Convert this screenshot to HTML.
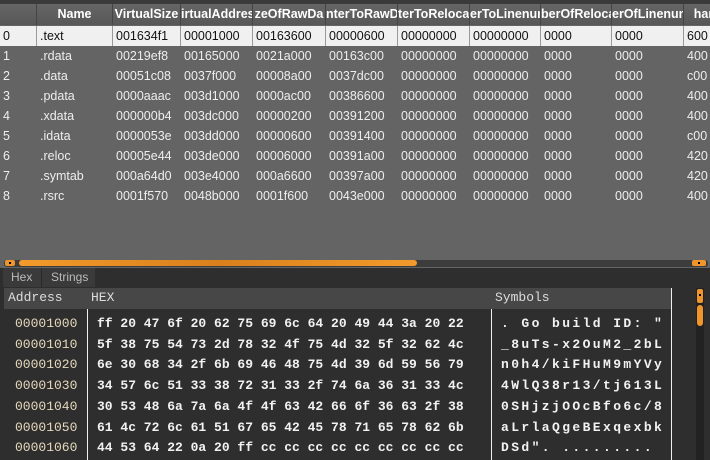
<!DOCTYPE html>
<html><head><style>
body{margin:0;width:710px;height:460px;overflow:hidden;background:#2e2e2e;position:relative;font-family:"Liberation Sans",sans-serif}
.a{position:absolute}
#top{left:0;top:0;width:710px;height:268px;background:#646464}
.hd{position:absolute;top:4px;height:21px;background:linear-gradient(#666,#575757);color:#fff;font-weight:bold;font-size:12.5px;line-height:21px;text-align:center;overflow:hidden;white-space:nowrap;border-right:1px solid #444}
.c{position:absolute;height:20px;line-height:20px;font-size:12.5px;color:#eee;white-space:nowrap;overflow:hidden;padding-left:3px;box-sizing:border-box}
.sel{background:#f0f0f0;color:#111;border-right:1px solid #999}
.m{font-family:"Liberation Mono",monospace;font-size:13px;font-weight:bold;position:absolute;white-space:pre}
</style></head><body>
<div id="top" class="a"></div>
<div class="a" style="left:0;top:0;width:710px;height:4px;background:#3a3a3a"></div>
<div id="tbl"></div>
<div class="a" style="left:4px;top:260px;width:704px;height:7px;background:#3c3c3c;border-radius:3px"></div>
<div class="a" style="left:5px;top:260px;width:10px;height:6px;background:#f0952a;border-radius:2px"><div class="a" style="left:4px;top:2px;width:2px;height:2px;background:#000"></div></div>
<div class="a" style="left:19px;top:260px;width:398px;height:6px;background:linear-gradient(90deg,#f39a2c,#d9801c,#f39a2c);border-radius:3px"></div>
<div class="a" style="left:692px;top:260px;width:14px;height:6px;background:#f0952a;border-radius:2px"><div class="a" style="left:6px;top:2px;width:2px;height:2px;background:#000"></div></div>
<div class="a" style="left:3px;top:268px;width:92px;height:19px;background:#3a3a3a"></div>
<div class="a" style="left:41px;top:268px;width:1px;height:19px;background:#2a2a2a"></div>
<div class="a" style="left:11px;top:270px;font-size:12px;color:#bbb">Hex</div>
<div class="a" style="left:51px;top:270px;font-size:12px;color:#bbb">Strings</div>
<div class="a" style="left:4px;top:288px;width:667px;height:21px;background:#474747"></div>
<div class="m" style="left:8px;top:290px;color:#ddd;font-weight:normal">Address</div>
<div class="m" style="left:91px;top:290px;color:#ddd;font-weight:normal">HEX</div>
<div class="m" style="left:495px;top:290px;color:#ddd;font-weight:normal">Symbols</div>
<div class="a" style="left:87px;top:309px;width:1px;height:151px;background:#eee"></div>
<div class="a" style="left:491px;top:309px;width:1px;height:151px;background:#eee"></div>
<div class="a" style="left:671px;top:288px;width:1px;height:172px;background:#eee"></div>
<div class="a" style="left:696px;top:288px;width:8px;height:172px;background:#222"></div>
<div class="a" style="left:697px;top:289px;width:6px;height:14px;background:#f0952a;border-radius:2px"><div class="a" style="left:2px;top:5px;width:2px;height:2px;background:#000"></div></div>
<div class="a" style="left:697px;top:305px;width:6px;height:21px;background:#f0952a;border-radius:3px"></div>
<div id="hex"></div>
<script>
var cols=[[0,37,''],[37,76,'Name'],[113,68,'VirtualSize'],[181,72,'irtualAddress'],[253,73,'zeOfRawDa'],[326,72,'nterToRawD'],[398,72,'terToReloca'],[470,71,'erToLinenum'],[541,71,'berOfReloca'],[612,72,'erOfLinenum'],[684,40,'har']];
var rows=[['0','.text','001634f1','00001000','00163600','00000600','00000000','00000000','0000','0000','600'],
['1','.rdata','00219ef8','00165000','0021a000','00163c00','00000000','00000000','0000','0000','400'],
['2','.data','00051c08','0037f000','00008a00','0037dc00','00000000','00000000','0000','0000','c00'],
['3','.pdata','0000aaac','003d1000','0000ac00','00386600','00000000','00000000','0000','0000','400'],
['4','.xdata','000000b4','003dc000','00000200','00391200','00000000','00000000','0000','0000','400'],
['5','.idata','0000053e','003dd000','00000600','00391400','00000000','00000000','0000','0000','c00'],
['6','.reloc','00005e44','003de000','00006000','00391a00','00000000','00000000','0000','0000','420'],
['7','.symtab','000a64d0','003e4000','000a6600','00397a00','00000000','00000000','0000','0000','420'],
['8','.rsrc','0001f570','0048b000','0001f600','0043e000','00000000','00000000','0000','0000','400']];
var h='';
cols.forEach(function(c){h+='<div class="hd" style="left:'+c[0]+'px;width:'+(c[1]-1)+'px">'+c[2]+'</div>';});
rows.forEach(function(r,i){r.forEach(function(v,j){var c=cols[j];h+='<div class="c'+(i==0?' sel':'')+'" style="top:'+(26+i*20)+'px;left:'+c[0]+'px;width:'+c[1]+'px">'+v+'</div>';});});
document.getElementById('tbl').innerHTML=h;
var hx=[['00001000','ff 20 47 6f 20 62 75 69 6c 64 20 49 44 3a 20 22','. Go build ID: "'],
['00001010','5f 38 75 54 73 2d 78 32 4f 75 4d 32 5f 32 62 4c','_8uTs-x2OuM2_2bL'],
['00001020','6e 30 68 34 2f 6b 69 46 48 75 4d 39 6d 59 56 79','n0h4/kiFHuM9mYVy'],
['00001030','34 57 6c 51 33 38 72 31 33 2f 74 6a 36 31 33 4c','4WlQ38r13/tj613L'],
['00001040','30 53 48 6a 7a 6a 4f 4f 63 42 66 6f 36 63 2f 38','0SHjzjOOcBfo6c/8'],
['00001050','61 4c 72 6c 61 51 67 65 42 45 78 71 65 78 62 6b','aLrlaQgeBExqexbk'],
['00001060','44 53 64 22 0a 20 ff cc cc cc cc cc cc cc cc cc','DSd". .........']];
var g='';
hx.forEach(function(r,i){var t=316+i*20.7;
g+='<div class="m" style="left:15px;top:'+t+'px;color:#e6d9bd;font-weight:normal">'+r[0]+'</div>';
g+='<div class="m" style="left:97px;top:'+t+'px;color:#f2f2f2">'+r[1]+'</div>';
g+='<div class="m" style="left:501px;top:'+t+'px;color:#f2f2f2;letter-spacing:2.4px">'+r[2].replace(/&/g,'&amp;').replace(/</g,'&lt;')+'</div>';});
document.getElementById('hex').innerHTML=g;
</script>
</body></html>
